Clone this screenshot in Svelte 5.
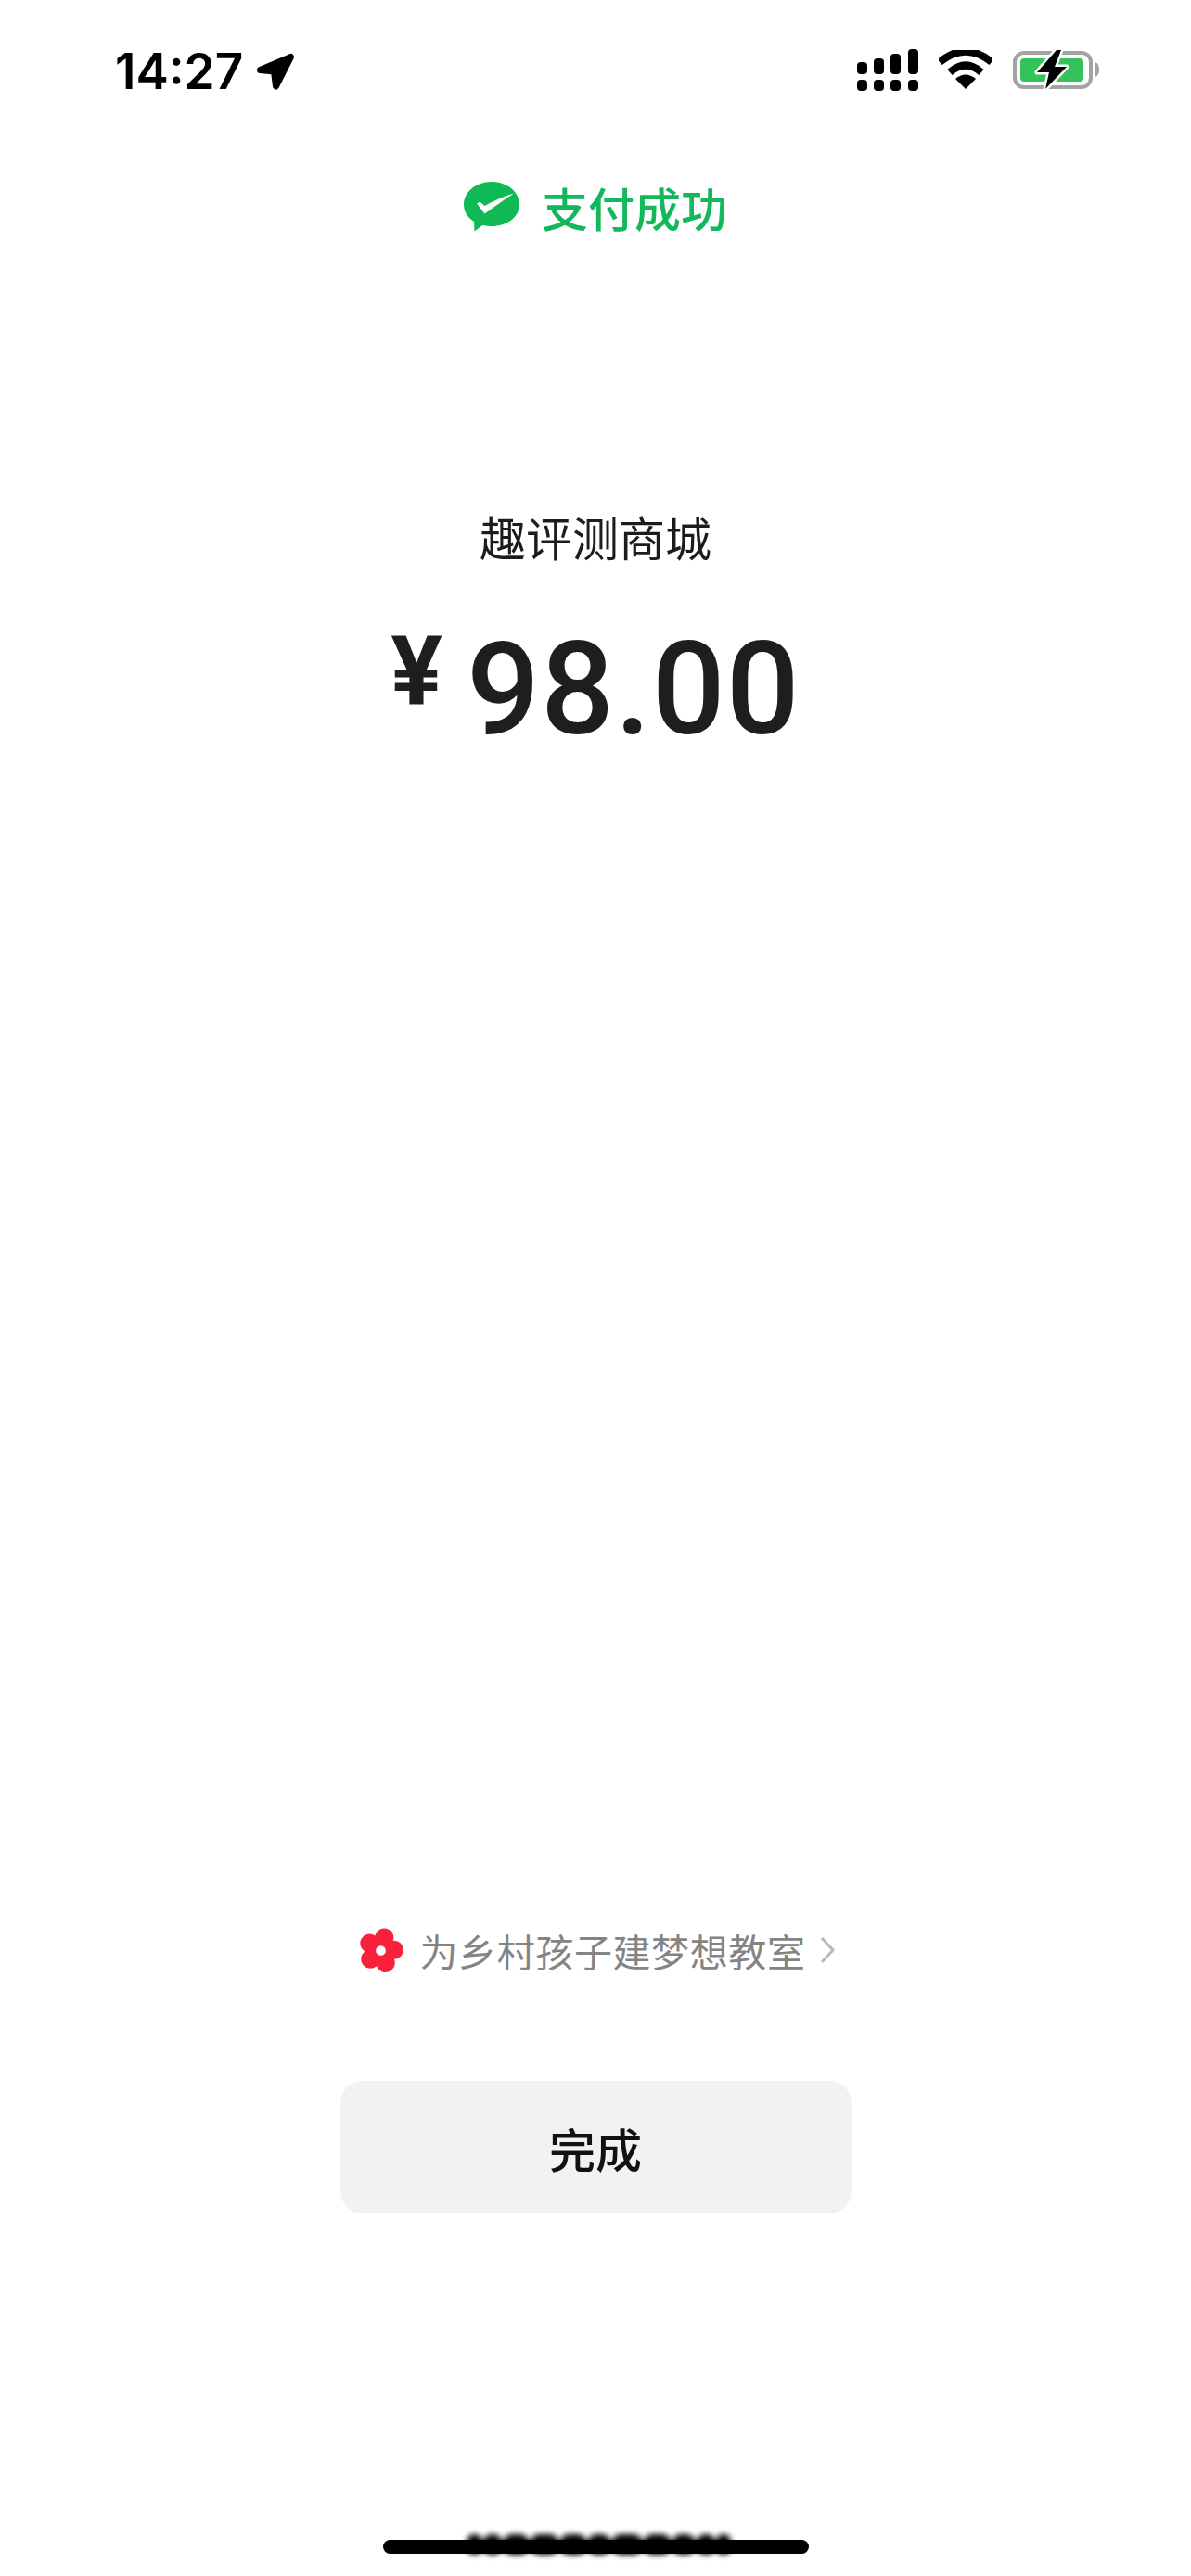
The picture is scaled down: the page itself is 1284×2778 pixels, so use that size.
<script>
	const lobes = [15, 87, 159, 231, 303];
	const blobs = [17, 22, 29, 32, 30, 26, 34, 31, 26, 22, 16];
</script>

<div class="page">
	<div class="status">
		<div class="time-wrap">
			<span class="time">14:27</span>
			<svg class="arrow" viewBox="0 0 42 40" width="42" height="40">
				<path d="M4.500 18.500 L37.500 4.500 L21.500 36 L19.500 20 Z" fill="#000" stroke="#000" stroke-width="7" stroke-linejoin="round" />
			</svg>
		</div>
		<div class="status-icons">
			<svg class="signal" viewBox="0 0 66 46" width="66" height="46">
				<rect x="0" y="14" width="11" height="13" rx="4" />
				<rect x="18" y="10" width="11" height="17" rx="4" />
				<rect x="36" y="5" width="11" height="22" rx="4" />
				<rect x="55" y="0" width="11" height="27" rx="4" />
				<rect x="0" y="33" width="11" height="12" rx="4" />
				<rect x="18" y="33" width="11" height="12" rx="4" />
				<rect x="36" y="33" width="11" height="12" rx="4" />
				<rect x="55" y="33" width="11" height="12" rx="4" />
			</svg>
			<svg class="wifi" viewBox="0 0 58 42" width="58" height="42">
				<path d="M1 13 Q29 -10 57 13" fill="none" stroke="#000" stroke-width="8" />
				<path d="M12 24 Q29 9 46 24" fill="none" stroke="#000" stroke-width="8" />
				<path d="M18 31 Q29 22 40 31 L29 42 Z" fill="#000" />
			</svg>
			<svg class="battery" viewBox="0 0 94 46" width="94" height="46">
				<rect x="2" y="5" width="82" height="37" rx="10" fill="none" stroke="#a3a3a3" stroke-width="4" />
				<rect x="8" y="11" width="68" height="25" rx="4" fill="#34c35a" />
				<path d="M47 2 L26 26 H39 L35 44 L58 20 H45 L52 2 Z" fill="#000" stroke="#fff" stroke-width="5" stroke-linejoin="round" paint-order="stroke" />
				<path d="M89 15 Q93 17 93 23 Q93 29 89 31 Z" fill="#a3a3a3" />
			</svg>
		</div>
	</div>

	<div class="result">
		<svg class="wechat" viewBox="0 0 60 54" width="60" height="54">
			<path d="M30 0 C46.500 0 60 10.800 60 24.500 C60 38.200 46.500 48 30 48 C26.500 48 23.500 47.600 20.500 46.700 L11.500 53.500 L11 43 C4 38.500 0 32 0 24.500 C0 10.800 13.500 0 30 0 Z" fill="#0fb954" />
			<path d="M14 23.500 L17.500 21.500 L22.500 26 C30 22 39 17 54 12.500 C42 20.500 33 27 22.500 34.500 Z" fill="#fff" />
		</svg>
		<span>支付成功</span>
	</div>

	<div class="merchant">趣评测商城</div>
	<div class="amount"><span class="yen">¥</span><span class="num">98.00</span></div>

	<div class="spacer"></div>

	<div class="promo">
		<svg class="flower" viewBox="0 0 46 46" width="49" height="49">
			<g fill="#f8203a">
				{#each lobes as deg}
					<circle cx="23" cy="9.500" r="9.500" transform="rotate({deg} 23 23)" />
				{/each}
				<circle cx="23" cy="23" r="13.500" />
			</g>
			<circle cx="23" cy="23" r="5" fill="#fff" />
		</svg>
		<span class="promo-text">为乡村孩子建梦想教室</span>
		<svg class="chevron" viewBox="0 0 18 30" width="18" height="30">
			<path d="M3 2 L15 15 L3 28" fill="none" stroke="#b9b9b9" stroke-width="3" />
		</svg>
	</div>

	<button class="done">完成</button>

	<div class="home">
		<div class="bar"></div>
		<div class="watermark"></div>
		<div class="smudge">
			{#each blobs as w}
				<span style="width: {w}px"></span>
			{/each}
		</div>
	</div>
</div>

<style>
	:global(body) {
		margin: 0;
		background: #fff;
	}

	.page {
		width: 1284px;
		height: 2778px;
		display: flex;
		flex-direction: column;
		align-items: center;
		overflow: hidden;
		font-family: 'Noto Sans CJK SC', 'Roboto', sans-serif;
		background: #fff;
	}

	.status {
		width: 100%;
		box-sizing: border-box;
		height: 120px;
		padding: 52px 98px 0 124px;
		display: flex;
		justify-content: space-between;
		align-items: flex-start;
	}

	.time-wrap {
		display: flex;
		align-items: center;
		gap: 14px;
	}

	.time {
		font-family: 'Inter', sans-serif;
		font-weight: 600;
		font-size: 53px;
		line-height: 50px;
		color: #000;
	}

	.status-icons {
		display: flex;
		align-items: flex-start;
		gap: 22px;
	}

	.signal {
		margin-top: 1px;
	}

	.wifi {
		margin-top: 2px;
	}

	.result {
		margin-top: 73px;
		display: flex;
		align-items: center;
		gap: 24px;
		color: #14b85c;
		font-size: 50px;
		font-weight: 500;
		line-height: 60px;
	}

	.merchant {
		margin-top: 290px;
		font-size: 50px;
		line-height: 70px;
		color: #1c1c1c;
	}

	.amount {
		margin-top: 46px;
		display: flex;
		align-items: flex-start;
		color: #1e1e1e;
		font-family: 'Roboto', sans-serif;
		font-weight: 500;
		line-height: 170px;
	}

	.yen {
		font-size: 104px;
		font-weight: 700;
		line-height: 130px;
		margin-right: 26px;
	}

	.num {
		font-size: 139px;
		letter-spacing: 1px;
	}

	.spacer {
		flex: 1;
	}

	.promo {
		display: flex;
		align-items: center;
		height: 50px;
		color: #848484;
		font-size: 41px;
		margin-left: 2px;
	}

	.promo-text {
		margin-left: 18px;
		letter-spacing: 0.6px;
	}

	.chevron {
		margin-left: 14px;
	}

	.done {
		margin-top: 116px;
		width: 551px;
		height: 143px;
		border: none;
		border-radius: 24px;
		background: #f2f2f2;
		color: #111;
		font-family: inherit;
		font-size: 50px;
		font-weight: 500;
		padding: 0;
	}

	.home {
		position: relative;
		margin-top: 352px;
		margin-bottom: 24px;
		width: 459px;
		height: 15px;
	}

	.bar {
		height: 15px;
		border-radius: 8px;
		background: #000;
	}

	/* blurred-out watermark over the home bar */
	.watermark {
		position: absolute;
		left: 90px;
		top: 12px;
		width: 270px;
		height: 10px;
		background: #e4e4e4;
		filter: blur(3px);
		z-index: -1;
	}

	.smudge {
		position: absolute;
		left: 90px;
		top: -6px;
		width: 285px;
		height: 22px;
		display: flex;
		align-items: center;
		filter: blur(3px);
	}

	.smudge span {
		height: 22px;
		border-radius: 11px;
		background: #000;
		flex: none;
	}
</style>
